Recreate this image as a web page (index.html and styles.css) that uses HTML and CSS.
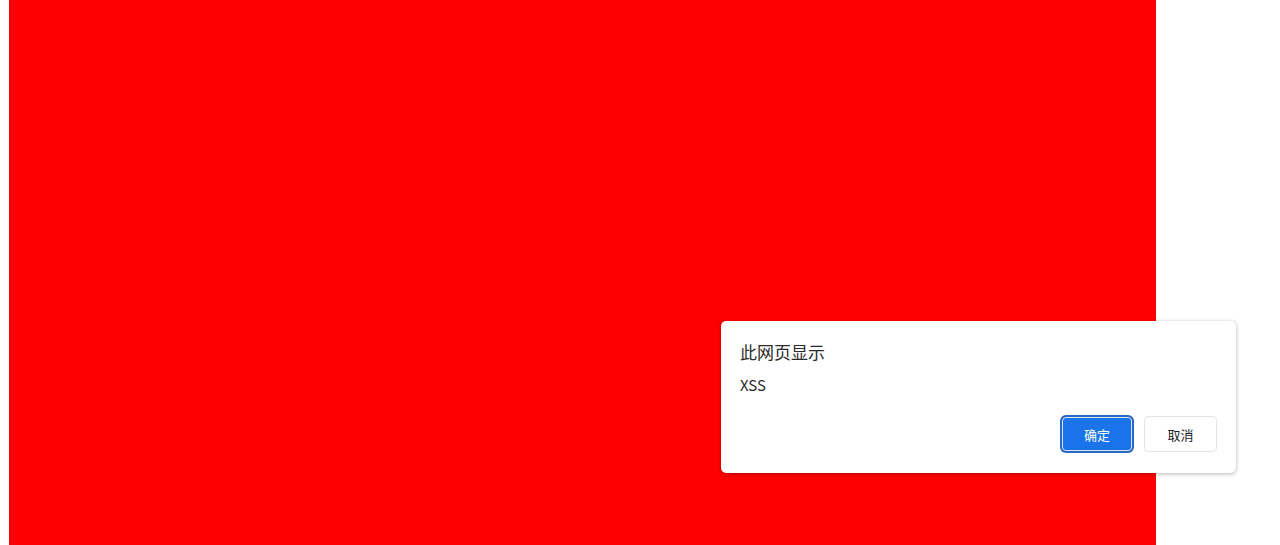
FILE: index.html
```html
<!DOCTYPE html>
<html lang="zh-CN">
<head>
<meta charset="utf-8">
<title>XSS</title>
<link rel="stylesheet" href="styles.css">
</head>
<body>
<div class="red-block"></div>
<div class="dialog" role="alertdialog">
  <div class="dialog-title">此网页显示</div>
  <div class="dialog-message">XSS</div>
  <div class="dialog-buttons">
    <button class="btn btn-primary">确定</button>
    <button class="btn btn-secondary">取消</button>
  </div>
</div>
</body>
</html>
```
FILE: styles.css
```css
html, body {
  margin: 0;
  padding: 0;
  background: #ffffff;
  height: 545px;
  overflow: hidden;
}
body {
  font-family: "Noto Sans CJK SC", "Noto Sans", sans-serif;
}
.red-block {
  margin-left: 9px;
  width: 1147px;
  height: 545px;
  background: #ff0000;
}
.dialog {
  position: absolute;
  left: 721px;
  top: 321px;
  width: 515px;
  height: 152px;
  box-sizing: border-box;
  padding: 18px 19px 21px 19px;
  background: #ffffff;
  border-radius: 5px;
  box-shadow: 0 1px 4px rgba(0, 0, 0, 0.28), 0 0 1px rgba(0,0,0,0.15);
  display: flex;
  flex-direction: column;
}
.dialog-title {
  font-size: 17px;
  line-height: 26px;
  color: #2b2b2b;
}
.dialog-message {
  margin-top: 10px;
  font-size: 15px;
  line-height: 20px;
  color: #2b2b2b;
}
.dialog-buttons {
  margin-top: auto;
  display: flex;
  justify-content: flex-end;
  gap: 11px;
}
.btn {
  font-family: "Noto Sans CJK SC", "Noto Sans", sans-serif;
  font-size: 13px;
  height: 36px;
  width: 73px;
  border-radius: 4px;
  cursor: pointer;
}
.btn-primary {
  background: #1a73e8;
  color: #ffffff;
  border: 1px solid #d8e6fb;
  box-shadow: 0 0 0 2px #2b68c4;
  width: 70px;
  height: 34px;
  margin-top: 1px;
  margin-right: 1px;
}
.btn-secondary {
  background: #ffffff;
  color: #202124;
  border: 1px solid #e3e5e8;
}
```
